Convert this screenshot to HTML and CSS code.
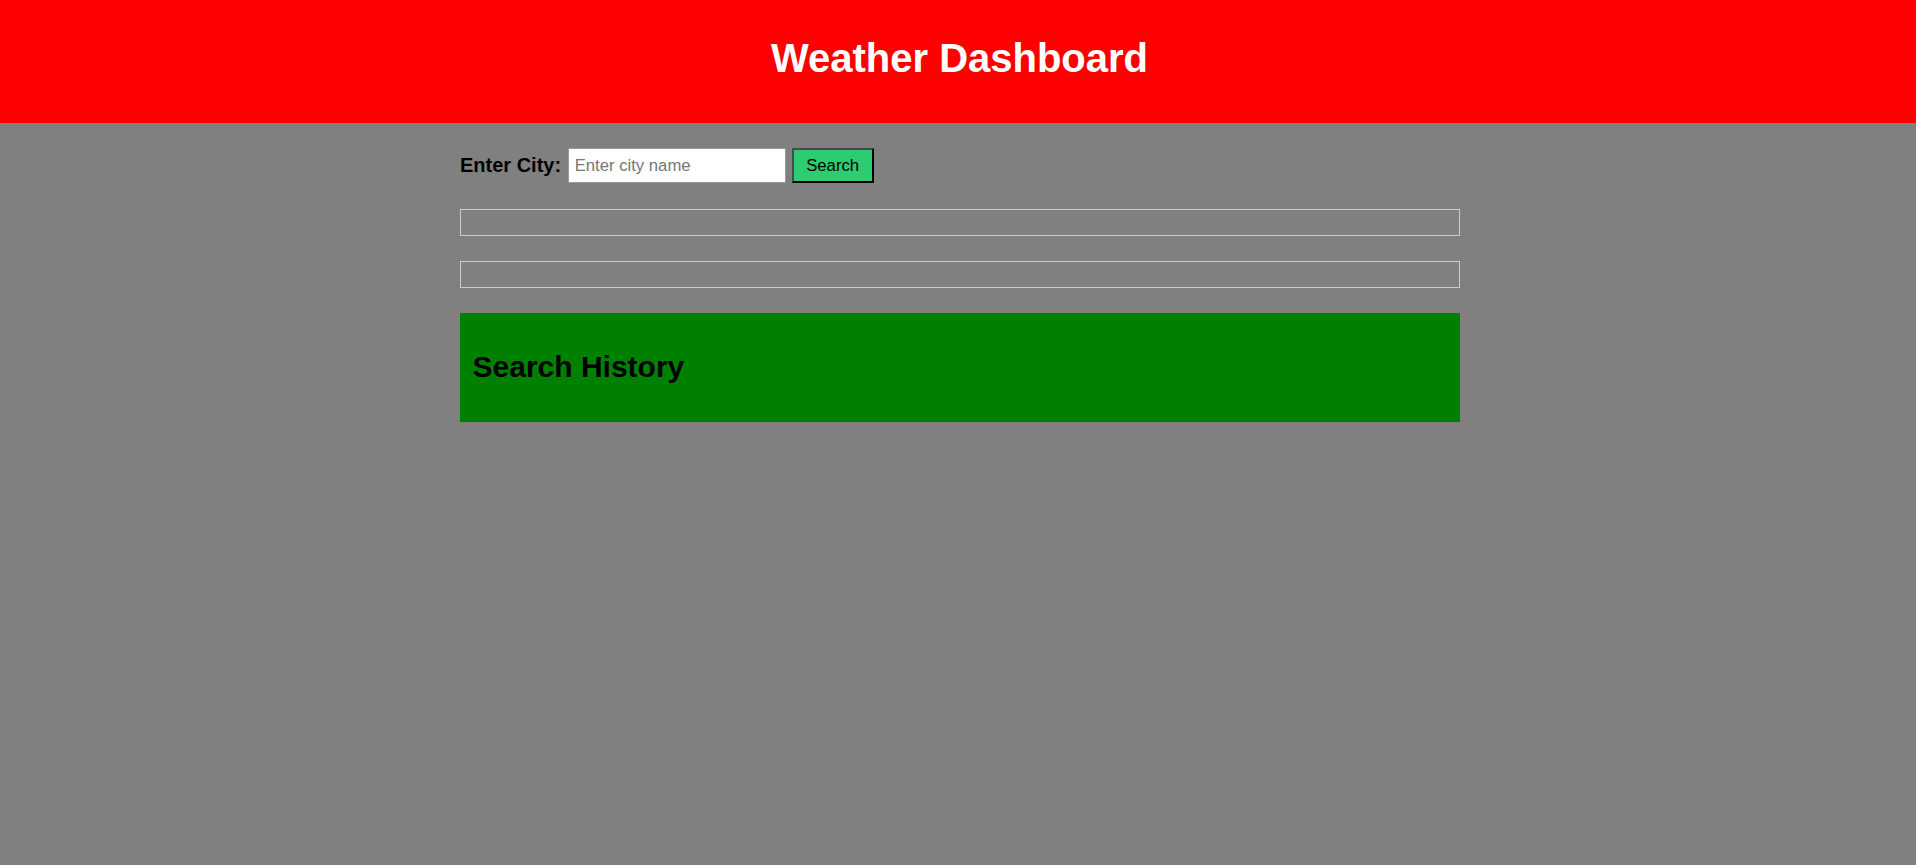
FILE: index.html
```html
<!DOCTYPE html>
<html lang="en">
<head>
<meta charset="utf-8">
<title>Weather Dashboard</title>
<link rel="stylesheet" href="styles.css">
</head>
<body>
<header class="site-header">
  <h1 class="site-title">Weather Dashboard</h1>
</header>
<main class="container">
  <form class="search-row" onsubmit="return false;">
    <label class="search-label" for="city">Enter City:</label>
    <input class="search-input" id="city" type="text" placeholder="Enter city name">
    <button class="search-button" type="submit">Search</button>
  </form>
  <section class="panel current-weather"></section>
  <section class="panel forecast"></section>
  <section class="history">
    <h2 class="history-title">Search History</h2>
  </section>
</main>
</body>
</html>
```

FILE: styles.css
```css
* { box-sizing: border-box; }
html, body {
  margin: 0;
  padding: 0;
}
body {
  background: #808080;
  font-family: "Liberation Sans", Arial, sans-serif;
  color: #000;
  min-height: 865px;
}
.site-header {
  background: #ff0000;
  padding: 8px 0 15px 3px;
  text-align: center;
}
.site-title {
  margin: 27px 0;
  font-size: 40px;
  line-height: 46px;
  font-weight: bold;
  color: #fff;
}
.container {
  width: 1000px;
  margin: 25px auto 0;
  position: relative;
  left: 2px;
}
.search-row {
  display: flex;
  align-items: center;
  height: 35px;
  margin: 0 0 26px;
}
.search-label {
  font-size: 20px;
  font-weight: bold;
  margin-right: 6.5px;
}
.search-input {
  width: 218px;
  height: 35px;
  border: 1px solid #9a9a9a;
  background: #fff;
  padding: 0 6px;
  font-family: "Liberation Sans", Arial, sans-serif;
  font-size: 16.7px;
  margin-right: 6px;
}
.search-input::placeholder { color: #757575; }
.search-button {
  width: 82px;
  height: 35px;
  background: #2ecc71;
  border-style: solid;
  border-width: 2px;
  border-color: #4a4a4a #000 #000 #4a4a4a;
  font-family: "Liberation Sans", Arial, sans-serif;
  font-size: 16.7px;
  color: #000;
  padding: 0;
}
.panel {
  height: 27px;
  border: 1px solid #cccccc;
  margin-bottom: 25px;
}
.history {
  background: #008000;
  padding: 12px 12.5px;
}
.history-title {
  margin: 25px 0;
  font-size: 30px;
  line-height: 34.5px;
  font-weight: bold;
}
```
